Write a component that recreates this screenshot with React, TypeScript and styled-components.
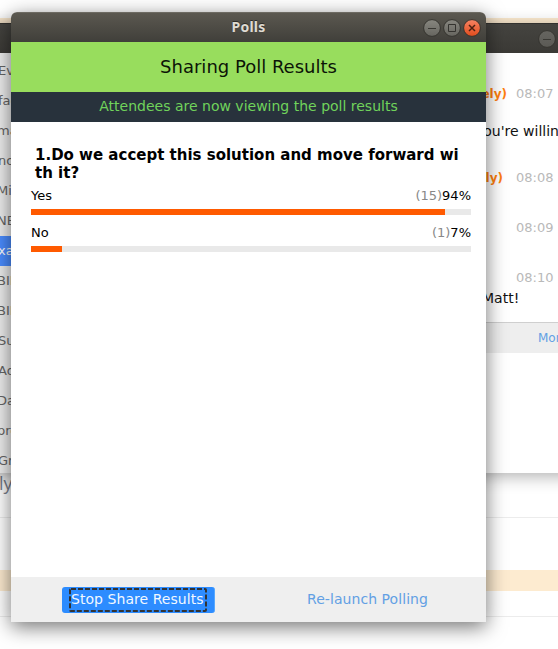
import React from "react";
import styled, { createGlobalStyle } from "styled-components";

const GlobalStyle = createGlobalStyle`
  * { box-sizing: border-box; }
  html, body { margin: 0; background: #fff; }
  body { font-family: "DejaVu Sans", sans-serif; font-size: 14px; overflow: hidden; }
`;

const Desktop = styled.main`
  position: relative;
  width: 558px;
  height: 649px;
  overflow: hidden;
  background: #fff;
`;

const Page = styled.div`
  display: flex;
  flex-direction: column;
  padding-top: 18px;
`;

const Highlight = styled.div<{ $h: number }>`
  flex: none;
  height: ${(p) => p.$h}px;
  background: #fdebd0;
`;

const PageRow = styled.div<{ $h: number; $line?: boolean }>`
  flex: none;
  height: ${(p) => p.$h}px;
  border-bottom: ${(p) => (p.$line ? "1px solid #ececec" : "none")};
  color: #7a808c;
  font: 18px/28px "Open Sans", sans-serif;
  text-indent: -1px;
  display: flex;
  align-items: flex-start;
`;

const BackWindow = styled.section`
  position: absolute;
  left: -40px;
  top: 23px;
  width: 700px;
  height: 450px;
  background: #fff;
  box-shadow: 0 3px 16px rgba(0, 0, 0, 0.32);
  display: flex;
  flex-direction: column;
`;

const BackTitle = styled.header`
  flex: none;
  height: 30px;
  display: flex;
  align-items: center;
  padding-left: 578px;
  background: linear-gradient(#454440, #3b3a36);
  border-top: 1px solid #33322f;
`;

const BackBody = styled.div`
  flex: 1;
  display: flex;
  min-height: 0;
`;

const Sidebar = styled.nav`
  width: 285px;
  flex: none;
  background: #ededed;
  padding-top: 3px;
  overflow: hidden;
`;

const Channel = styled.div<{ $active?: boolean; $indent: number }>`
  height: 30px;
  line-height: 30px;
  padding-left: ${(p) => p.$indent}px;
  white-space: nowrap;
  font-size: 13px;
  color: ${(p) => (p.$active ? "#fff" : "#666")};
  background: ${(p) => (p.$active ? "#4a8cff" : "transparent")};
`;

const Chat = styled.div`
  flex: 1;
  display: flex;
  flex-direction: column;
  padding-top: 31px;
`;

const MessageHead = styled.div`
  display: flex;
  height: 20px;
  line-height: 20px;
`;

const Sender = styled.b<{ $end: number }>`
  width: ${(p) => p.$end}px;
  flex: none;
  margin-right: ${(p) => 271 - p.$end}px;
  text-align: right;
  font-size: 12px;
  color: #ff7f0e;
`;

const Time = styled.time`
  font-size: 13px;
  color: #b9b9b9;
`;

const MessageText = styled.p<{ $h: number; $indent: number }>`
  margin: 0;
  height: ${(p) => p.$h}px;
  padding-left: ${(p) => p.$indent}px;
  line-height: 20px;
  font-size: 14px;
  color: #111;
  white-space: nowrap;
  display: flex;
  align-items: flex-end;
`;

const Toolbar = styled.div`
  margin-top: 14px;
  height: 31px;
  padding-left: 293px;
  line-height: 30px;
  font-size: 12px;
  border-top: 1px solid #cfcfcf;
  background: #eee;
  color: #62a0e4;
`;

const Spacer = styled.div<{ $h: number }>`
  flex: none;
  height: ${(p) => p.$h}px;
`;

const Dialog = styled.section`
  position: absolute;
  left: 11px;
  top: 12px;
  width: 475px;
  height: 610px;
  border-radius: 6px 6px 0 0;
  overflow: hidden;
  display: flex;
  flex-direction: column;
  background: #fff;
`;

const DialogShadow = styled.div`
  position: absolute;
  left: 11px;
  top: 12px;
  width: 475px;
  height: 610px;
  border-radius: 6px 6px 0 0;
  box-shadow: 0 5px 20px rgba(0, 0, 0, 0.55);
`;

const TitleBar = styled.header`
  height: 30px;
  flex: none;
  display: grid;
  grid-template-columns: 1fr auto 1fr;
  align-items: center;
  padding-right: 5px;
  padding-left: 5px;
  background: linear-gradient(#5b5850, #403f3a);
  border-top: 1px solid #6d6a62;
`;

const WindowTitle = styled.h1`
  grid-column: 2;
  margin: 0;
  padding-bottom: 1px;
  font: 700 14px/20px "Noto Sans", sans-serif;
  letter-spacing: 0.2px;
  color: #dfdbd2;
  text-shadow: 0 -1px 0 #2d2c28;
`;

const WindowButtons = styled.div`
  display: flex;
  justify-content: flex-end;
  gap: 2px;
`;

const Heading = styled.h2`
  flex: none;
  margin: 0;
  height: 50px;
  line-height: 50px;
  text-align: center;
  font-size: 18px;
  font-weight: 400;
  color: #0c1407;
  background: #98dd5d;
`;

const Notice = styled.p`
  flex: none;
  margin: 0;
  height: 30px;
  line-height: 29px;
  text-align: center;
  color: #70d35b;
  background: #28323c;
`;

const Results = styled.div`
  flex: 1;
  padding: 24px 15px 0 20px;
`;

const Question = styled.h3`
  margin: 0 0 4px;
  padding-left: 4px;
  font-size: 15px;
  line-height: 18px;
  font-weight: 700;
  color: #000;
  white-space: nowrap;
`;

const Answer = styled.div`
  height: 37px;
  color: #000;
`;

const AnswerLabel = styled.div`
  display: flex;
  justify-content: space-between;
  height: 20px;
  line-height: 20px;
  font-size: 13px;
`;

const Count = styled.span`
  color: #888;
`;

const Track = styled.div`
  height: 6px;
  margin-top: 3px;
  background: #e9e9e9;
`;

const Fill = styled.div`
  height: 100%;
  background: #ff5a00;
`;

const Footer = styled.footer`
  flex: none;
  height: 45px;
  display: flex;
  align-items: center;
  background: #efefef;
`;

const StopButton = styled.button`
  margin: 0 0 0 51px;
  width: 153px;
  height: 26px;
  padding: 1px 8px 1px 7px;
  border: 1px solid #56a8ff;
  border-width: 0 1px 0 0;
  border-radius: 3px;
  background: #2d8cff;
  color: #f2f8ff;
  font: inherit;
  display: flex;
`;

const FocusRing = styled.svg`
  position: absolute;
  inset: 0;
  width: 138px;
  height: 24px;
`;

const StopLabel = styled.span`
  position: relative;
  width: 138px;
  height: 24px;
  line-height: 23px;
  padding-left: 2px;
  letter-spacing: 0.05px;
  text-align: left;
  white-space: nowrap;
`;

const LinkButton = styled.button`
  margin: 0 0 0 92px;
  padding: 0 0 2px;
  border: 0;
  background: none;
  color: #62a0e4;
  font: inherit;
  letter-spacing: 0.06px;
`;

type Kind = "minimize" | "maximize" | "close";

const Glyph = styled.svg`
  display: block;
  width: 18px;
  height: 18px;
`;

function WindowButton({ kind, dim }: { kind: Kind; dim?: boolean }) {
  const close = kind === "close";
  const id = `${kind}${dim ? "-dim" : ""}`;
  const top = close ? "#f78363" : dim ? "#666560" : "#888780";
  const bottom = close ? "#e04c1c" : dim ? "#5b5a55" : "#66655f";
  return (
    <Glyph viewBox="0 0 18 18" fill="none" role="img" aria-label={kind}>
      <defs>
        <linearGradient id={id} x2="0" y2="1">
          <stop stopColor={top} />
          <stop offset="1" stopColor={bottom} />
        </linearGradient>
      </defs>
      <circle cx="9" cy="9" r="8.4" fill={`url(#${id})`} stroke="#35342f" strokeWidth="1" />
      {kind === "minimize" && <path d="M5 9.5h8" stroke="#3a3934" />}
      {kind === "maximize" && <path d="M5.5 5.5h7v7h-7z" stroke="#34332f" />}
      {close && <path d="M6 6l6 6M12 6l-6 6" stroke="#4b2011" strokeWidth="1.5" />}
    </Glyph>
  );
}

const channels = [
  { name: "Events", indent: 38 },
  { name: "faculty", indent: 38 },
  { name: "marketing", indent: 37 },
  { name: "nomad", indent: 38 },
  { name: "Mike", indent: 37 },
  { name: "NEXT", indent: 37 },
  { name: "xapi", indent: 38, active: true },
  { name: "BIM", indent: 37 },
  { name: "BIM", indent: 37 },
  { name: "Support", indent: 38 },
  { name: "Adam", indent: 38 },
  { name: "David", indent: 37 },
  { name: "project", indent: 37 },
  { name: "Group", indent: 38 },
];

const answers = [
  { label: "Yes", count: 15, percent: 94, bar: 94.1 },
  { label: "No", count: 1, percent: 7, bar: 7 },
];

export default function App() {
  return (
    <Desktop>
      <GlobalStyle />
      <Page>
        <Highlight $h={5} />
        <PageRow $h={446} />
        <PageRow $h={49} $line>ly</PageRow>
        <PageRow $h={52} />
        <Highlight $h={21} />
        <PageRow $h={26} $line />
      </Page>
      <BackWindow>
        <BackTitle>
          <WindowButton kind="minimize" dim />
        </BackTitle>
        <BackBody>
          <Sidebar>
            {channels.map((c, i) => (
              <Channel key={i} $indent={c.indent} $active={c.active}>{c.name}</Channel>
            ))}
          </Sidebar>
          <Chat>
            <MessageHead><Sender $end={262}>(Privately)</Sender><Time>08:07</Time></MessageHead>
            <MessageText $h={37} $indent={230}>you're willing</MessageText>
            <Spacer $h={27} />
            <MessageHead><Sender $end={258}>(Privately)</Sender><Time>08:08</Time></MessageHead>
            <Spacer $h={30} />
            <MessageHead><Sender $end={200} /><Time>08:09</Time></MessageHead>
            <Spacer $h={30} />
            <MessageHead><Sender $end={200} /><Time>08:10</Time></MessageHead>
            <MessageText $h={20} $indent={237}>Matt!</MessageText>
            <Toolbar>More</Toolbar>
          </Chat>
        </BackBody>
      </BackWindow>
      <DialogShadow />
      <Dialog>
        <TitleBar>
          <WindowTitle>Polls</WindowTitle>
          <WindowButtons>
            <WindowButton kind="minimize" />
            <WindowButton kind="maximize" />
            <WindowButton kind="close" />
          </WindowButtons>
        </TitleBar>
        <Heading>Sharing Poll Results</Heading>
        <Notice>Attendees are now viewing the poll results</Notice>
        <Results>
          <Question>1.Do we accept this solution and move forward wi<br />th it?</Question>
          {answers.map((a) => (
            <Answer key={a.label}>
              <AnswerLabel>
                <span>{a.label}</span>
                <span><Count>({a.count})</Count>{a.percent}%</span>
              </AnswerLabel>
              <Track><Fill style={{ width: `${a.bar}%` }} /></Track>
            </Answer>
          ))}
        </Results>
        <Footer>
          <StopButton>
            <StopLabel>
              Stop Share Results
              <FocusRing viewBox="0 0 138 24" fill="none">
                <rect x="1" y="1" width="136" height="22" rx="1" stroke="#333" strokeWidth="2" strokeDasharray="5 2" />
              </FocusRing>
            </StopLabel>
          </StopButton>
          <LinkButton>Re-launch Polling</LinkButton>
        </Footer>
      </Dialog>
    </Desktop>
  );
}
